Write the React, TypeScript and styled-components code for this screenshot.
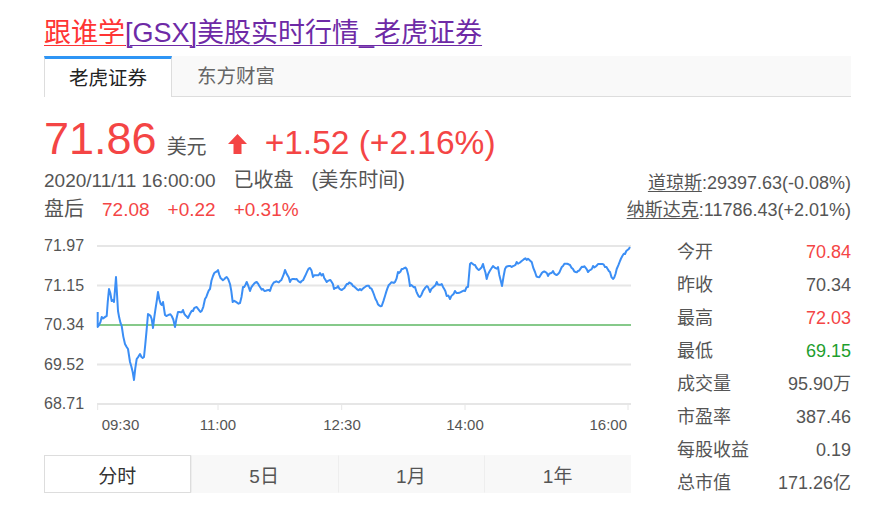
import styled, { createGlobalStyle } from 'styled-components';

const GlobalStyle = createGlobalStyle`
  body {
    margin: 0;
    background: #fff;
    font-family: 'Liberation Sans', 'Noto Sans CJK SC', sans-serif;
    color: #555;
  }
`;

const RED = '#f44545';
const GREEN = '#1e9e2e';

const Page = styled.div`
  padding: 16px 30px 0 44px;
  width: 807px;
`;

const Title = styled.h1`
  margin: 0;
  font-size: 27px;
  font-weight: normal;
  line-height: 34px;
  white-space: nowrap;
  a {
    text-decoration: underline;
    text-underline-offset: 3px;
    text-decoration-thickness: 1px;
  }
`;

const TitleLink = styled.a<{ $hot?: boolean }>`
  color: ${(p) => (p.$hot ? '#ff3434' : '#6e2aa6')};
`;

const Tabs = styled.div`
  display: flex;
  margin-top: 6px;
  height: 40px;
  background: #f9f9f9;
  border-bottom: 1px solid #ddd;
`;

const Tab = styled.div<{ $active?: boolean }>`
  padding: 0 24px;
  font-size: 19.5px;
  height: ${(p) => (p.$active ? '38px' : '40px')};
  color: ${(p) => (p.$active ? '#222' : '#666')};
  background: ${(p) => (p.$active ? '#fff' : 'transparent')};
  border-top: ${(p) => (p.$active ? '3px solid #2e95f5' : 'none')};
  border-left: 1px solid ${(p) => (p.$active ? '#ddd' : 'transparent')};
  border-right: 1px solid ${(p) => (p.$active ? '#ddd' : 'transparent')};
  margin-bottom: ${(p) => (p.$active ? '-1px' : '0')};
  line-height: ${(p) => (p.$active ? '38px' : '40px')};
`;

const PriceRow = styled.div`
  display: flex;
  align-items: baseline;
  margin-top: 19px;
  height: 50px;
  color: ${RED};
`;

const Price = styled.span`
  font-size: 45px;
  line-height: 45px;
`;

const Unit = styled.span`
  font-size: 20px;
  color: #555;
  margin-left: 10px;
`;

const Change = styled.span`
  font-size: 33.5px;
  margin-left: 21px;
  display: inline-flex;
  align-items: baseline;
  svg {
    margin-right: 18px;
  }
`;

const InfoRow = styled.div`
  display: flex;
  justify-content: space-between;
  align-items: flex-end;
`;

const InfoLine = styled.div`
  font-size: 19px;
  line-height: 29px;
  white-space: nowrap;
  span + span {
    margin-left: 18px;
  }
`;

const Cjk = styled.span`
  font-size: 20px;
`;

const Num = styled.span<{ $color?: string }>`
  color: ${(p) => p.$color || '#555'};
`;

const IndexLine = styled.div`
  font-size: 18px;
  line-height: 27px;
  text-align: right;
  white-space: nowrap;
  a {
    color: #555;
    text-decoration: underline;
    text-underline-offset: 2px;
  }
`;

const MainRow = styled.div`
  display: flex;
  margin-top: 7px;
`;

const ChartCol = styled.div`
  width: 587px;
  display: flex;
  flex-direction: column;
`;

const Periods = styled.div`
  display: grid;
  grid-template-columns: repeat(4, 1fr);
  margin-top: 16px;
  height: 38px;
  background: #f8f8f8;
`;

const Period = styled.div<{ $active?: boolean }>`
  display: flex;
  align-items: center;
  justify-content: center;
  font-size: 19px;
  color: ${(p) => (p.$active ? '#333' : '#555')};
  background: ${(p) => (p.$active ? '#fff' : 'transparent')};
  border: 1px solid ${(p) => (p.$active ? '#ddd' : 'transparent')};
  & + & {
    border-left: 1px solid #eee;
  }
`;

const Stats = styled.div`
  flex: 1;
  padding-left: 46px;
  padding-top: 5px;
`;

const StatRow = styled.div`
  display: flex;
  justify-content: space-between;
  font-size: 18px;
  line-height: 33px;
`;

const rawPoints = `97.7,313 97.7,328 101.7,318 106.7,317 109,290 111.7,302 114,303 116,278 118,312 121.7,327 125,345 128,350 130,363 134,381 136.7,360 140,355 144,358 148,315 151.7,320 153,329 158,293 160.7,305 163,303 165,316 171.7,317 175,328 178,313 183,311 188,319 193,312 196.7,308 201.7,312 205,300 210,290 213,277 218,271 221.7,280 226.7,278 230,285 232.7,303 240,304 243,288 246.7,283 250,292 256.7,283 263,290 270,292 275,283 280,282 285,271 290,283 296.7,280 301.7,282 310,269 313,278 320,274 323,275 326.7,283 331.7,283 334,290 338,287 343,290 348,285 353,287 360,290 365,288 370,289 373,293 376.7,302 381.7,307 385,297 390,285 395,283 398,273 401.7,270 406.7,270 410,287 415,288 420,298 423,292 428,288 430,293 436.7,283 441.7,285 446.7,297 450,300 455,292 465,292 468,288 470,265 475,266 480,270 483,265 486.7,280 493,267 498,268 502,287 505,270 511.7,268 516.7,263 521.7,262 526.7,261 531.7,263 535,273 538,278 543,273 548,277 553,272 558,275 563,267 570,266 573,270 578,272 583,268 588,273 593,267 598,265 605,268 610,273 613,280 616.7,270 620,262 625,255 630,248`;

// add small deterministic wiggle between the traced points
const buildLine = () => {
  const pts = rawPoints.split(' ').map((p) => p.split(',').map(Number));
  const out: string[] = [];
  let k = 0;
  for (let i = 0; i < pts.length - 1; i++) {
    const [x1, y1] = pts[i];
    const [x2, y2] = pts[i + 1];
    const steps = Math.max(1, Math.round((x2 - x1) / 1.4));
    for (let s = 0; s < steps; s++) {
      const t = s / steps;
      const jitter = s === 0 ? 0 : Math.sin(k * 12.9898) * 2;
      out.push(`${(x1 + (x2 - x1) * t - 44).toFixed(1)},${(y1 + (y2 - y1) * t - 232 + jitter).toFixed(1)}`);
      k++;
    }
  }
  const last = pts[pts.length - 1];
  out.push(`${last[0] - 44},${last[1] - 232}`);
  return out.join(' ');
};

const yLabels = ['71.97', '71.15', '70.34', '69.52', '68.71'];
const gridY = [15, 54.5, 94, 133.5, 173];
const ticks = [53.7, 174, 297.7, 421, 584];

const Chart = () => (
  <svg width="587" height="208" viewBox="0 0 587 208" style={{ display: 'block' }}>
    {gridY.map((y, i) =>
      i === 2 ? null : <line key={y} x1="53" x2="587" y1={y} y2={y} stroke="#e6e6e6" strokeWidth="2" />
    )}
    {ticks.map((x) => (
      <line key={x} x1={x} x2={x} y1="173" y2="179" stroke="#e6e6e6" strokeWidth="1" />
    ))}
    <line x1="53" x2="587" y1="94" y2="94" stroke="#86c98a" strokeWidth="2" />
    <polyline points={buildLine()} fill="none" stroke="#3b8ef5" strokeWidth="2" strokeLinejoin="round" />
    {yLabels.map((l, i) => (
      <text key={l} x="0" y={gridY[i] + 5} fontSize="16" fill="#555" fontFamily="Liberation Sans, sans-serif">
        {l}
      </text>
    ))}
    <g fontSize="15" fill="#555" fontFamily="Liberation Sans, sans-serif">
      <text x="57.7" y="199">09:30</text>
      <text x="174" y="199" textAnchor="middle">11:00</text>
      <text x="298" y="199" textAnchor="middle">12:30</text>
      <text x="421" y="199" textAnchor="middle">14:00</text>
      <text x="583" y="199" textAnchor="end">16:00</text>
    </g>
  </svg>
);

const stats: [string, string, string?][] = [
  ['今开', '70.84', RED],
  ['昨收', '70.34'],
  ['最高', '72.03', RED],
  ['最低', '69.15', GREEN],
  ['成交量', '95.90万'],
  ['市盈率', '387.46'],
  ['每股收益', '0.19'],
  ['总市值', '171.26亿'],
];

const UpArrow = () => (
  <svg width="19" height="20" viewBox="0 0 19 20">
    <path d="M9.5 0 L19 10 L13.5 10 L13.5 20 L5.5 20 L5.5 10 L0 10 Z" fill={RED} />
  </svg>
);

export default function App() {
  return (
    <>
      <GlobalStyle />
      <Page>
        <Title>
          <TitleLink $hot href="#">跟谁学</TitleLink>
          <TitleLink href="#">[GSX]美股实时行情_老虎证券</TitleLink>
        </Title>
        <Tabs>
          <Tab $active>老虎证券</Tab>
          <Tab>东方财富</Tab>
        </Tabs>
        <PriceRow>
          <Price>71.86</Price>
          <Unit>美元</Unit>
          <Change>
            <UpArrow />
            +1.52 (+2.16%)
          </Change>
        </PriceRow>
        <InfoRow>
          <div>
            <InfoLine>
              <span>2020/11/11 16:00:00</span>
              <Cjk>已收盘</Cjk>
              <Cjk>(美东时间)</Cjk>
            </InfoLine>
            <InfoLine>
              <Cjk>盘后</Cjk>
              <Num $color={RED}>72.08</Num>
              <Num $color={RED}>+0.22</Num>
              <Num $color={RED}>+0.31%</Num>
            </InfoLine>
          </div>
          <div>
            <IndexLine>
              <a href="#">道琼斯</a>:29397.63(-0.08%)
            </IndexLine>
            <IndexLine>
              <a href="#">纳斯达克</a>:11786.43(+2.01%)
            </IndexLine>
          </div>
        </InfoRow>
        <MainRow>
          <ChartCol>
            <Chart />
            <Periods>
              <Period $active>分时</Period>
              <Period>5日</Period>
              <Period>1月</Period>
              <Period>1年</Period>
            </Periods>
          </ChartCol>
          <Stats>
            {stats.map(([k, v, c]) => (
              <StatRow key={k}>
                <span>{k}</span>
                <Num $color={c}>{v}</Num>
              </StatRow>
            ))}
          </Stats>
        </MainRow>
      </Page>
    </>
  );
}
